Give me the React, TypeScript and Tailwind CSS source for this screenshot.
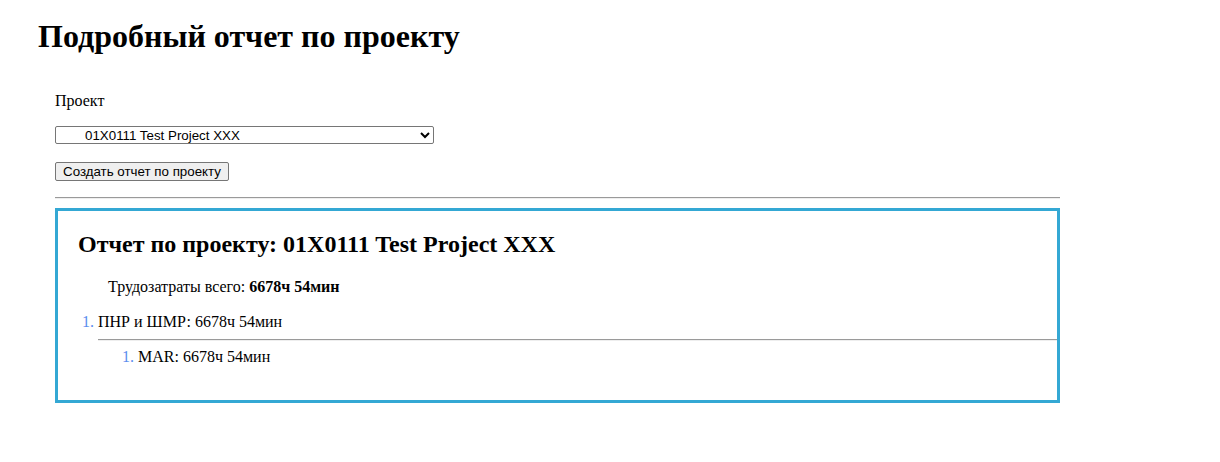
export default function App() {
  return (
    <div className="min-h-screen bg-white pl-[38px] pt-[18px] font-['Liberation_Serif',serif] text-black">
      <h1 className="text-[32px] font-bold leading-[37px]">Подробный отчет по проекту</h1>

      <div className="ml-[17px] mt-[37px] w-[1005px]">
        <label className="block text-[16px] leading-[18px]">Проект</label>
        <select
          defaultValue="p1"
          className="mt-4 block h-[18px] w-[379px] rounded-[2px] border border-[#767676] bg-white pl-[25px] font-['Liberation_Sans',sans-serif] text-[13.33px] leading-[16px] text-black"
        >
          <option value="p1">01X0111 Test Project XXX</option>
        </select>
        <button className="mt-[18px] block h-[19px] w-[174px] rounded-[2px] border border-[#767676] bg-[#efefef] font-['Liberation_Sans',sans-serif] text-[13.33px] leading-[15px] text-black">
          Создать отчет по проекту
        </button>

        <hr className="mt-[16px] border-t border-b border-t-[#9a9a9a] border-b-[#eeeeee]" />

        <div className="mt-[9px] box-border h-[195px] border-[3px] border-[#34a8d4] pl-[20px] pt-[19px]">
          <h2 className="text-[24px] font-bold leading-[28px]">Отчет по проекту: 01X0111 Test Project XXX</h2>
          <p className="mt-[20px] pl-[30px] text-[16px] leading-[18px]">
            Трудозатраты всего: <b>6678ч 54мин</b>
          </p>
          <ol className="-ml-[20px] mt-[17px] list-decimal pl-[40px] text-[16px] leading-[18px] marker:text-[#5a8dee]">
            <li>
              ПНР и ШМР: 6678ч 54мин
              <hr className="mt-[8px] border-t border-b border-t-[#9a9a9a] border-b-[#eeeeee]" />
              <ol className="mt-[7px] list-decimal pl-[40px] marker:text-[#5a8dee]">
                <li>MAR: 6678ч 54мин</li>
              </ol>
            </li>
          </ol>
        </div>
      </div>
    </div>
  );
}
